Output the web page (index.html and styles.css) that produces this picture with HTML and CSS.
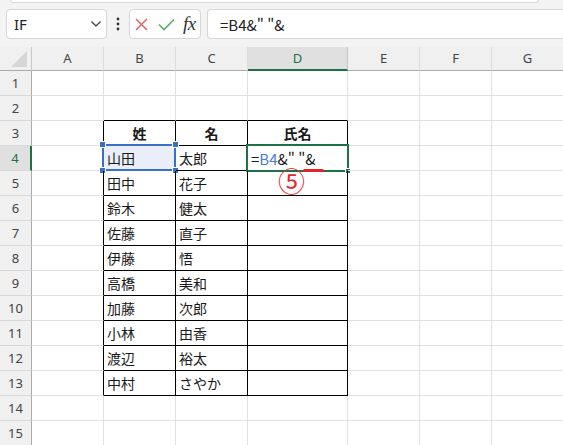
FILE: index.html
```html
<!DOCTYPE html>
<html lang="ja">
<head>
<meta charset="utf-8">
<link rel="stylesheet" href="styles.css">
</head>
<body>
<div class="ribbon"></div>
<div class="bar">
  <div class="namebox"><span>IF</span>
    <svg width="12" height="8" viewBox="0 0 12 8"><polyline points="1.5,1.5 6,6 10.5,1.5" fill="none" stroke="#444" stroke-width="1.4"/></svg>
  </div>
  <div class="dots"><svg width="4" height="14" viewBox="0 0 4 14"><circle cx="2" cy="2" r="1.4" fill="#333"/><circle cx="2" cy="7" r="1.4" fill="#333"/><circle cx="2" cy="12" r="1.4" fill="#333"/></svg></div>
  <div class="fxbox">
    <svg class="ico-x" width="13" height="13" viewBox="0 0 13 13"><path d="M1 1 L12 12 M12 1 L1 12" stroke="#e06464" stroke-width="1.5" fill="none"/></svg>
    <svg class="ico-ok" width="17" height="13" viewBox="0 0 17 13"><polyline points="1,6.5 6,11.5 16,1.5" fill="none" stroke="#5aae6a" stroke-width="1.6"/></svg>
    <i class="fx">fx</i>
  </div>
  <div class="formula">=B4&amp;" "&amp;</div>
</div>
<div class="sheet">
  <div class="corner"><div class="tri"></div></div>
  <div class="ch">A</div><div class="ch">B</div><div class="ch">C</div><div class="ch sel">D</div><div class="ch">E</div><div class="ch">F</div><div class="ch">G</div>

  <div class="rh">1</div><div class="c"></div><div class="c"></div><div class="c"></div><div class="c"></div><div class="c"></div><div class="c"></div><div class="c"></div>
  <div class="rh">2</div><div class="c"></div><div class="c tt"></div><div class="c tt"></div><div class="c tt"></div><div class="c"></div><div class="c"></div><div class="c"></div>
  <div class="rh">3</div><div class="c tl"></div><div class="c tb th">姓</div><div class="c tb th">名</div><div class="c tb th">氏名</div><div class="c"></div><div class="c"></div><div class="c"></div>
  <div class="rh sel">4</div><div class="c tl"></div>
  <div class="c tb ref">山田<div class="refbox"><span class="h h1"></span><span class="h h2"></span><span class="h h3"></span><span class="h h4"></span></div></div>
  <div class="c tb">太郎</div>
  <div class="c tb edit"><span class="eq">=</span><span class="blue">B4</span><span>&amp;" "&amp;</span><div class="actbox"><span class="gh"></span></div><span class="uline"></span></div>
  <div class="c"><span class="num">⑤</span></div><div class="c"></div><div class="c"></div>
  <div class="rh">5</div><div class="c tl"></div><div class="c tb">田中</div><div class="c tb">花子</div><div class="c tb"></div><div class="c"></div><div class="c"></div><div class="c"></div>
  <div class="rh">6</div><div class="c tl"></div><div class="c tb">鈴木</div><div class="c tb">健太</div><div class="c tb"></div><div class="c"></div><div class="c"></div><div class="c"></div>
  <div class="rh">7</div><div class="c tl"></div><div class="c tb">佐藤</div><div class="c tb">直子</div><div class="c tb"></div><div class="c"></div><div class="c"></div><div class="c"></div>
  <div class="rh">8</div><div class="c tl"></div><div class="c tb">伊藤</div><div class="c tb">悟</div><div class="c tb"></div><div class="c"></div><div class="c"></div><div class="c"></div>
  <div class="rh">9</div><div class="c tl"></div><div class="c tb">高橋</div><div class="c tb">美和</div><div class="c tb"></div><div class="c"></div><div class="c"></div><div class="c"></div>
  <div class="rh">10</div><div class="c tl"></div><div class="c tb">加藤</div><div class="c tb">次郎</div><div class="c tb"></div><div class="c"></div><div class="c"></div><div class="c"></div>
  <div class="rh">11</div><div class="c tl"></div><div class="c tb">小林</div><div class="c tb">由香</div><div class="c tb"></div><div class="c"></div><div class="c"></div><div class="c"></div>
  <div class="rh">12</div><div class="c tl"></div><div class="c tb">渡辺</div><div class="c tb">裕太</div><div class="c tb"></div><div class="c"></div><div class="c"></div><div class="c"></div>
  <div class="rh">13</div><div class="c tl"></div><div class="c tb">中村</div><div class="c tb">さやか</div><div class="c tb"></div><div class="c"></div><div class="c"></div><div class="c"></div>
  <div class="rh">14</div><div class="c"></div><div class="c"></div><div class="c"></div><div class="c"></div><div class="c"></div><div class="c"></div><div class="c"></div>
  <div class="rh">15</div><div class="c"></div><div class="c"></div><div class="c"></div><div class="c"></div><div class="c"></div><div class="c"></div><div class="c"></div>
</div>
</body>
</html>
```

FILE: styles.css
```css
* { box-sizing: border-box; }
html, body { margin: 0; padding: 0; }
body {
  width: 563px;
  height: 445px;
  overflow: hidden;
  background: #f3f3f3;
  font-family: "Noto Sans CJK JP", sans-serif;
}
.ribbon {
  height: 3px;
  margin: 0 24px 0 10px;
  background: #fff;
  border: 1px solid #dadada;
  border-top: 0;
  border-radius: 0 0 4px 4px;
}
.bar {
  display: flex;
  height: 30px;
  margin-top: 6px;
  padding-left: 6px;
}
.namebox {
  width: 101px;
  background: #fff;
  border: 1px solid #d6d6d6;
  border-radius: 4px;
  display: flex;
  align-items: center;
  justify-content: space-between;
  padding: 0 4px 0 7px;
  font-family: "Noto Sans", sans-serif;
  font-size: 15px;
  color: #222;
}
.dots {
  width: 22px;
  display: flex;
  align-items: center;
  justify-content: center;
}
.fxbox {
  width: 72px;
  background: #fff;
  border: 1px solid #d6d6d6;
  border-radius: 4px;
  display: flex;
  align-items: center;
  padding-left: 5px;
}
.ico-x { margin-right: 10px; }
.ico-ok { margin-right: 8px; }
.fx {
  font-family: "Liberation Serif", "DejaVu Serif", serif;
  font-size: 19px;
  color: #333;
  letter-spacing: -0.5px;
}
.formula {
  flex: 1;
  margin-left: 6px;
  background: #fff;
  border: 1px solid #d6d6d6;
  border-right: 0;
  border-radius: 4px 0 0 4px;
  padding-left: 12px;
  display: flex;
  align-items: center;
  font-size: 15px;
  color: #222;
}
.sheet {
  margin-top: 8px;
  display: grid;
  grid-template-columns: 32px 72px 72px 72px 100px 72px 72px 72px;
  grid-template-rows: 24px repeat(15, 25px);
  background: #fff;
}
.corner {
  background: #f0f0f0;
  border-right: 1px solid #c8c8c8;
  border-bottom: 1px solid #ababab;
  position: relative;
}
.tri {
  position: absolute;
  right: 4px;
  bottom: 3px;
  width: 0;
  height: 0;
  border-left: 16px solid transparent;
  border-bottom: 16px solid #d6d6d6;
}
.ch {
  background: #f0f0f0;
  border-right: 1px solid #dcdcdc;
  border-bottom: 1px solid #ababab;
  display: flex;
  justify-content: center;
  align-items: center;
  font-family: "Noto Sans", sans-serif;
  font-size: 13px;
  color: #444;
  padding-bottom: 1px;
}
.ch.sel {
  background: #e0e0e0;
  color: #1e7145;
  border-bottom: 2px solid #1e7145;
  border-right-color: #c6c6c6;
}
.rh {
  background: #f0f0f0;
  border-right: 1px solid #ababab;
  border-bottom: 1px solid #d8d8d8;
  display: flex;
  justify-content: center;
  align-items: center;
  font-family: "Noto Sans", sans-serif;
  font-size: 13px;
  color: #444;
}
.rh.sel {
  background: #e0e0e0;
  color: #1e7145;
  border-right: 2px solid #1e7145;
}
.c {
  border-right: 1px solid #e1e1e1;
  border-bottom: 1px solid #e1e1e1;
  display: flex;
  align-items: center;
  padding-left: 3px;
  font-size: 14px;
  color: #1a1a1a;
  position: relative;
  white-space: nowrap;
}
.c.tl { border-right-color: #000; }
.c.tt { border-bottom-color: #000; }
.c.tb { border-right-color: #000; border-bottom-color: #000; }
.c.th { justify-content: center; font-weight: bold; padding-left: 0; }
.c.ref { background: #e9eef8; }
.refbox {
  position: absolute;
  left: -2px;
  top: -2px;
  width: 74px;
  height: 27px;
  border: 2px solid #3a6fc8;
}
.h {
  position: absolute;
  width: 7px;
  height: 7px;
  background: #3a6fc8;
  border: 1px solid #fff;
}
.h1 { left: -5px; top: -5px; }
.h2 { right: -5px; top: -5px; }
.h3 { left: -5px; bottom: -5px; }
.h4 { right: -5px; bottom: -5px; }
.edit { font-size: 15px; padding-left: 3px; }
.eq { color: #1a1a1a; }
.blue { color: #4a7dd4; }
.actbox {
  position: absolute;
  left: -2px;
  top: -2px;
  width: 103px;
  height: 28px;
  border: 2px solid #1e7145;
}
.gh {
  position: absolute;
  right: -4px;
  bottom: -4px;
  width: 6px;
  height: 6px;
  background: #1e7145;
  border: 1px solid #fff;
}
.uline {
  position: absolute;
  left: 55px;
  top: 23px;
  width: 21px;
  height: 3px;
  border-radius: 2px;
  background: #e8222b;
}
.num {
  position: absolute;
  left: -70px;
  top: 24px;
  font-size: 27px;
  line-height: 22px;
  color: #e8222b;
  z-index: 2;
}
```
